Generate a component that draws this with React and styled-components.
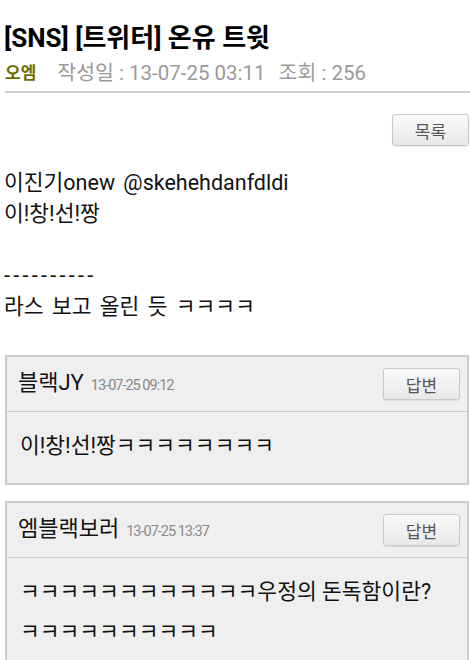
import styled, { createGlobalStyle } from "styled-components";

const GlobalStyle = createGlobalStyle`
  body {
    margin: 0;
    background: #ffffff;
    font-family: Roboto, "Noto Sans CJK KR", sans-serif;
    color: #111;
  }
  p {
    margin: 0;
  }
`;

const Page = styled.div`
  width: 470px;
  padding: 22px 0 0 4px;
  box-sizing: border-box;
`;

const Title = styled.h1`
  margin: 0;
  font-size: 26px;
  line-height: 32px;
  font-weight: 700;
  color: #000;
`;

const Meta = styled.div`
  display: flex;
  align-items: center;
  height: 28px;
  margin: 3px 0 0 1px;
  padding-bottom: 6px;
  border-bottom: 2px solid #cfcfcf;
  font-size: 20.5px;
  color: #9a9a9a;
`;

const Author = styled.span`
  font-size: 17px;
  font-weight: 700;
  color: #6d6a00;
  margin-right: 21px;
`;

const MetaItem = styled.span`
  margin-right: 13px;
`;

const Toolbar = styled.div`
  display: flex;
  justify-content: flex-end;
  padding: 21px 1px 0 0;
`;

const Button = styled.button`
  width: 77px;
  height: 32px;
  padding: 0;
  border: 1px solid #c9c9c9;
  border-radius: 3px;
  background: linear-gradient(#f9f9f9, #e8e8e8);
  box-shadow: 0 1px 1px rgba(0, 0, 0, 0.08);
  color: #555;
  font-family: Roboto, "Noto Sans CJK KR", sans-serif;
  font-size: 17px;
`;

const Content = styled.div`
  margin-top: 21px;
  font-size: 21.5px;
  line-height: 31px;
  word-spacing: 3px;
  color: #111;
`;

const Line = styled.p`
  letter-spacing: ${(p) => (p.$dashed ? "3.3px" : "normal")};
  min-height: 31px;
`;

const Comments = styled.div`
  display: flex;
  flex-direction: column;
  gap: 16px;
  margin-top: 33px;
  padding: 0 1px 0 1px;
`;

const Comment = styled.div`
  border: 2px solid #cccccc;
  background: #efefef;
`;

const CommentHead = styled.div`
  display: flex;
  align-items: center;
  justify-content: space-between;
  height: 54px;
  padding: 0 7px 0 11px;
  border-bottom: 1px solid #cccccc;
`;

const Who = styled.div`
  display: flex;
  align-items: baseline;
  gap: 7px;
  margin-top: -9px;
`;

const Name = styled.span`
  font-size: 22px;
  color: #111;
`;

const Stamp = styled.span`
  font-size: 14.5px;
  color: #8a8a8a;
  letter-spacing: -1px;
`;

const CommentBody = styled.div`
  padding: 14px 13px 17px 13px;
  font-size: 21.5px;
  line-height: 40px;
  color: #111;
`;

const comments = [
  { name: "블랙JY", date: "13-07-25 09:12", lines: ["이!창!선!짱ㅋㅋㅋㅋㅋㅋㅋㅋ"] },
  {
    name: "엠블랙보러",
    date: "13-07-25 13:37",
    lines: ["ㅋㅋㅋㅋㅋㅋㅋㅋㅋㅋㅋㅋ우정의 돈독함이란?", "ㅋㅋㅋㅋㅋㅋㅋㅋㅋㅋ"],
  },
];

function App() {
  return (
    <>
      <GlobalStyle />
      <Page>
        <Title>[SNS] [트위터] 온유 트윗</Title>
        <Meta>
          <Author>오엠</Author>
          <MetaItem>작성일 : 13-07-25 03:11</MetaItem>
          <MetaItem>조회 : 256</MetaItem>
        </Meta>
        <Toolbar>
          <Button>목록</Button>
        </Toolbar>
        <Content>
          <Line>이진기onew @skehehdanfdldi</Line>
          <Line>이!창!선!짱</Line>
          <Line />
          <Line $dashed>----------</Line>
          <Line>라스 보고 올린 듯 ㅋㅋㅋㅋ</Line>
        </Content>
        <Comments>
          {comments.map((c) => (
            <Comment key={c.name}>
              <CommentHead>
                <Who>
                  <Name>{c.name}</Name>
                  <Stamp>{c.date}</Stamp>
                </Who>
                <Button>답변</Button>
              </CommentHead>
              <CommentBody>
                {c.lines.map((l) => (
                  <p key={l}>{l}</p>
                ))}
              </CommentBody>
            </Comment>
          ))}
        </Comments>
      </Page>
    </>
  );
}

export default App;
